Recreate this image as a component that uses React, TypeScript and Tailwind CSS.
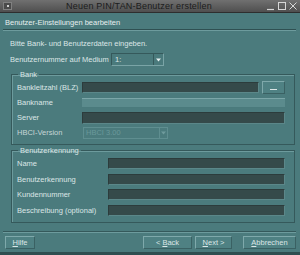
import React from 'react';

type RowProps = { label: string; labelW: string; children: React.ReactNode };

function Row({ label, labelW, children }: RowProps) {
  return (
    <div className="flex h-[15px] items-center">
      <span className={`${labelW} shrink-0 whitespace-nowrap`}>{label}</span>
      {children}
    </div>
  );
}

function Field({ className = '' }: { className?: string }) {
  return (
    <div
      className={`h-[11px] bg-[#354a4a] border border-t-[#2c3c3c] border-l-[#2c3c3c] border-b-[#5b8789] border-r-[#5b8789] ${className}`}
    />
  );
}

function Btn({ children, className = '' }: { children: React.ReactNode; className?: string }) {
  return (
    <div
      className={`h-[13px] flex items-center justify-center bg-[#4f8183] border border-t-[#7fa9ab] border-l-[#7fa9ab] border-b-[#3a6163] border-r-[#3a6163] ${className}`}
    >
      {children}
    </div>
  );
}

function Arrow({ dim = false }: { dim?: boolean }) {
  return (
    <svg width="5" height="4" viewBox="0 0 5 4">
      <path d="M0 0.5 L5 0.5 L2.5 3.5 Z" fill={dim ? '#6f9b9d' : '#e8f0f0'} />
    </svg>
  );
}

export default function App() {
  return (
    <div className="w-[300px] h-[255px] overflow-hidden flex flex-col bg-[#4b7b7d] text-[#dbe6e6] text-[7.5px] leading-[9px] font-['Liberation_Sans',Arial,sans-serif]">
      {/* title bar */}
      <div className="h-[13px] shrink-0 flex items-center bg-gradient-to-b from-[#707070] to-[#4f4f4f] border-b border-[#2e2e2e]">
        <div className="ml-[3px] w-[9px] h-[8px] bg-[#4a4a4a] border border-[#808080] flex items-center justify-center">
          <div className="w-[2px] h-[2px] bg-[#cfcfcf]" />
        </div>
        <div className="flex-1 text-center text-[9px] text-[#1c1c1c] tracking-[0.2px]">Neuen PIN/TAN-Benutzer erstellen</div>
        <div className="flex items-center gap-[1px] mr-[2px]">
          <svg width="10" height="10" viewBox="0 0 10 10">
            <path d="M1 8.5 H8" stroke="#d6d6d6" strokeWidth="1.2" />
          </svg>
          <svg width="10" height="10" viewBox="0 0 10 10">
            <rect x="1.5" y="1.5" width="7" height="7" fill="none" stroke="#d6d6d6" strokeWidth="1" />
          </svg>
          <svg width="10" height="10" viewBox="0 0 10 10">
            <path d="M1.5 1.5 L8.5 8.5 M8.5 1.5 L1.5 8.5" stroke="#d6d6d6" strokeWidth="1" />
          </svg>
        </div>
      </div>

      <div className="flex-1 flex flex-col pl-[3px] pr-[4px]">
        <div className="mt-[3px] h-[13px] flex items-center pl-[2px] text-[#e6eeee]">Benutzer-Einstellungen bearbeiten</div>
        <div className="h-px bg-[#2f5052]" />
        <div className="h-px bg-[#6d9b9d]" />

        <div className="mt-[6px] h-[13px] flex items-center pl-[7px]">Bitte Bank- und Benutzerdaten eingeben.</div>
        <div className="mt-[3px] h-[13px] flex items-center pl-[7px]">
          <span className="w-[101px] shrink-0 whitespace-nowrap">Benutzernummer auf Medium</span>
          <div className="w-[53px] h-[13px] flex bg-[#4a7a7c] border border-t-[#35595b] border-l-[#35595b] border-b-[#7aa4a6] border-r-[#7aa4a6]">
            <span className="flex-1 pl-[3px] leading-[11px]">1:</span>
            <div className="w-[10px] flex items-center justify-center border-l border-[#35595b]">
              <Arrow />
            </div>
          </div>
        </div>

        {/* Bank group */}
        <fieldset className="mt-[4px] ml-[8px] mr-[1px] border border-[#35595b] shadow-[inset_1px_1px_0_#6d9b9d] pl-[5px] pr-[4px] pt-[1px] pb-[4px]">
          <legend className="ml-[1px] px-[2px] leading-[9px]">Bank</legend>
          <Row label="Bankleitzahl (BLZ)" labelW="w-[65px]">
            <Field className="w-[177px]" />
            <Btn className="ml-[3px] w-[23px]">
              <span className="mt-[4px] w-[7px] h-px bg-[#dbe6e6]" />
            </Btn>
          </Row>
          <Row label="Bankname" labelW="w-[65px]">
            <div className="w-[203px] h-[10px] bg-[#5b8b8d] border-t border-[#7ba6a8] border-b border-b-[#4a7a7c]" />
          </Row>
          <Row label="Server" labelW="w-[65px]">
            <Field className="w-[203px] h-[12px]" />
          </Row>
          <Row label="HBCI-Version" labelW="w-[66px] text-[#c6d6d6]">
            <div className="w-[85px] h-[12px] flex border border-[#5f8e90]">
              <span className="flex-1 pl-[2px] leading-[10px] text-[#6a999b]">HBCI 3.00</span>
              <div className="w-[8px] flex items-center justify-center border-l border-[#5f8e90]">
                <Arrow dim />
              </div>
            </div>
          </Row>
        </fieldset>

        {/* Benutzerkennung group */}
        <fieldset className="mt-[1px] ml-[8px] mr-[1px] border border-[#35595b] shadow-[inset_1px_1px_0_#6d9b9d] pl-[5px] pr-[4px] pt-[1px] pb-[4px]">
          <legend className="ml-[1px] px-[2px] leading-[9px]">Benutzerkennung</legend>
          <div className="flex flex-col gap-[0.5px]">
            <Row label="Name" labelW="w-[91px]">
              <Field className="w-[177px]" />
            </Row>
            <Row label="Benutzerkennung" labelW="w-[91px]">
              <Field className="w-[177px]" />
            </Row>
            <Row label="Kundennummer" labelW="w-[91px]">
              <Field className="w-[177px]" />
            </Row>
            <Row label="Beschreibung (optional)" labelW="w-[91px]">
              <Field className="w-[177px]" />
            </Row>
          </div>
        </fieldset>

        <div className="mt-[8px] h-px bg-[#35595b]" />
        <div className="h-px bg-[#6d9b9d]" />

        <div className="mt-[3px] flex items-center">
          <Btn className="ml-[2px] w-[30px]">
            <span><span className="underline">H</span>ilfe</span>
          </Btn>
          <div className="flex-1" />
          <Btn className="w-[49px]">
            <span>&lt; <span className="underline">B</span>ack</span>
          </Btn>
          <Btn className="ml-[3px] w-[37px]">
            <span><span className="underline">N</span>ext &gt;</span>
          </Btn>
          <Btn className="ml-[11px] w-[53px]">
            <span><span className="underline">A</span>bbrechen</span>
          </Btn>
        </div>
      </div>
      <div className="h-[3px] shrink-0 bg-[#2f4f51]" />
    </div>
  );
}
